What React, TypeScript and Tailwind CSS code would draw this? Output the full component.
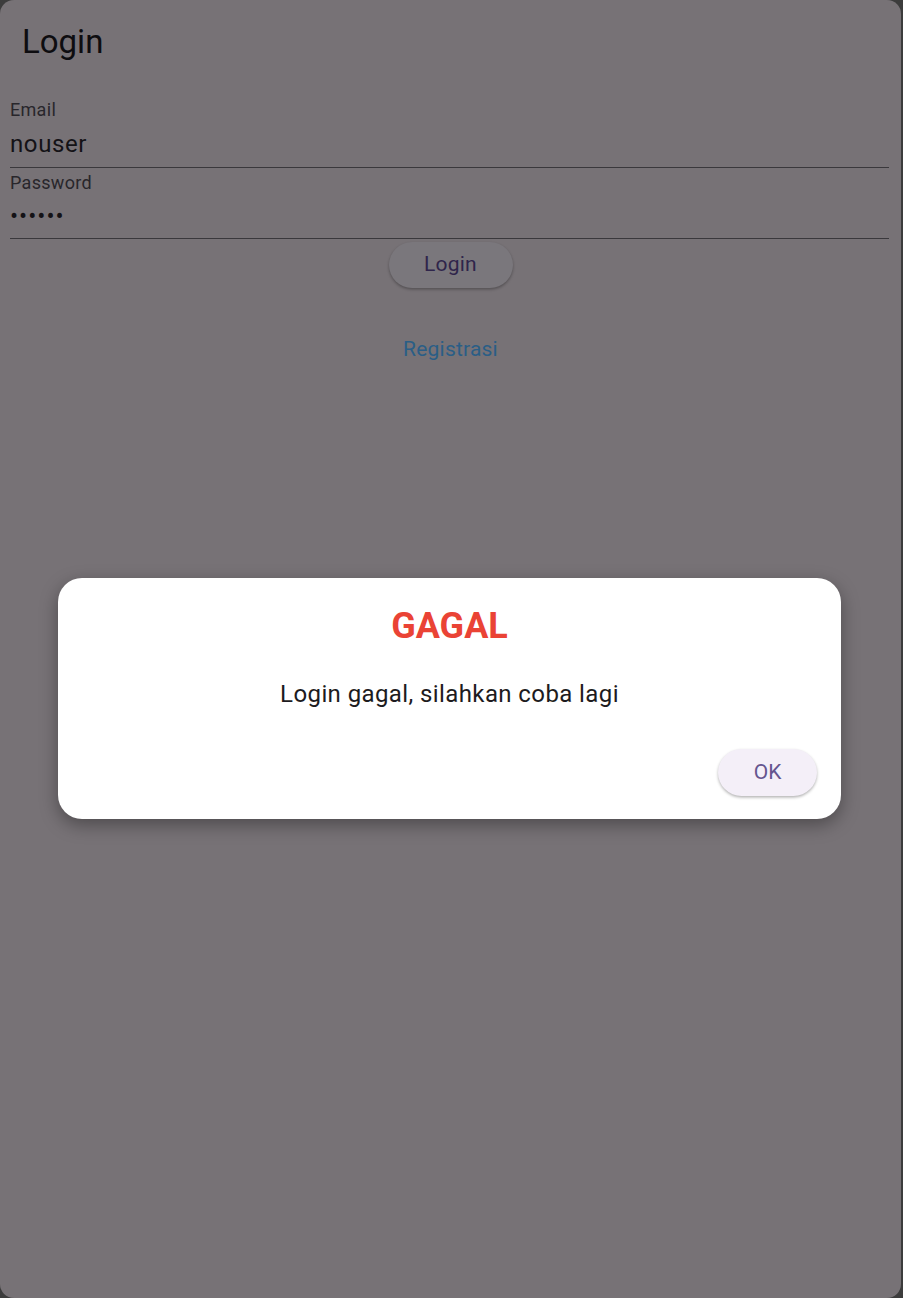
import React from "react";

export default function App() {
  return (
    <div className="w-full h-[1298px] bg-[#3c3c3c] font-['Roboto',sans-serif]">
      <div className="relative w-[901px] h-full rounded-[14px] bg-[#777276] overflow-hidden">
        <header className="h-[84px] px-[22px] flex items-center">
          <h1 className="text-[33px] text-[#0e0d10] -mt-[1px]">Login</h1>
        </header>

        <div className="pl-[10px] pr-[12px]">
          <div className="border-b-[1.5px] border-[#3a383c] pt-[14px] pb-[8px]">
            <div className="text-[18px] leading-[24px] text-[#28262b] tracking-[0.3px]">Email</div>
            <div className="text-[24px] leading-[30px] mt-[7px] text-[#141216] tracking-[0.6px]">nouser</div>
          </div>
          <div className="border-b-[1.5px] border-[#3a383c] pt-[3px] pb-[7px]">
            <div className="text-[18px] leading-[24px] text-[#28262b] tracking-[0.3px]">Password</div>
            <div className="text-[24px] leading-[30px] mt-[6px] text-[#141216] tracking-[1px]">••••••</div>
          </div>
        </div>

        <div className="flex flex-col items-center">
          <button className="mt-[3px] h-[46px] w-[124px] rounded-full bg-[#7a777c] shadow-[0_1.5px_3px_rgba(0,0,0,0.3)] text-[21px] text-[#2f254b] tracking-[0.2px]">
            Login
          </button>
          <button className="mt-[39px] h-[46px] px-[14px] text-[21px] text-[#2a5e86] tracking-[0.2px]">
            Registrasi
          </button>
        </div>

        <div className="absolute left-[58px] top-[578px] w-[783px] h-[241px] rounded-[24px] bg-white shadow-[0_6px_18px_rgba(0,0,0,0.35)] flex flex-col">
          <h2 className="mt-[24px] text-center text-[36px] leading-[48px] font-bold text-[#ea4335]">GAGAL</h2>
          <p className="mt-[28px] text-center text-[24px] leading-[32px] text-[#1d1b20] tracking-[0.4px]">
            Login gagal, silahkan coba lagi
          </p>
          <div className="mt-auto mb-[23px] mr-[24px] flex justify-end">
            <button className="h-[47px] w-[99px] rounded-full bg-[#f4eff8] shadow-[0_1.5px_3px_rgba(0,0,0,0.3)] text-[21px] text-[#65558f]">
              OK
            </button>
          </div>
        </div>
      </div>
    </div>
  );
}
